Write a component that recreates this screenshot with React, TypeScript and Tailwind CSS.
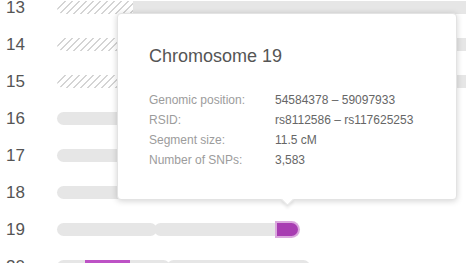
import React from "react";

const hatch =
  "bg-[repeating-linear-gradient(135deg,#d4d4d4_0_1.5px,transparent_1.5px_5px)]";

function Label({ n }: { n: number }) {
  return (
    <div className="w-[57px] shrink-0 pl-[6px] text-[17px] leading-none text-[#555]">
      {n}
    </div>
  );
}

function Row({ n, children }: { n: number; children?: React.ReactNode }) {
  return (
    <div className="flex h-[37px] items-center">
      <Label n={n} />
      <div className="flex h-[13px] items-center">{children}</div>
    </div>
  );
}

export default function App() {
  return (
    <div className="relative h-[263px] w-[466px] overflow-hidden bg-white font-['Liberation_Sans',Arial,sans-serif]">
      <div className="-mt-[11px] flex flex-col">
        <Row n={13}>
          <div className={`h-[13px] w-[76px] rounded-l-full ${hatch}`} />
          <div className="h-[13px] w-[360px] bg-[#e6e6e6]" />
        </Row>
        <Row n={14}>
          <div className={`h-[13px] w-[80px] rounded-l-full ${hatch}`} />
          <div className="h-[13px] w-[340px] bg-[#e6e6e6]" />
        </Row>
        <Row n={15}>
          <div className={`h-[13px] w-[80px] rounded-l-full ${hatch}`} />
          <div className="h-[13px] w-[340px] bg-[#e6e6e6]" />
        </Row>
        <Row n={16}>
          <div className="h-[13px] w-[300px] rounded-full bg-[#e6e6e6]" />
        </Row>
        <Row n={17}>
          <div className="h-[13px] w-[290px] rounded-full bg-[#e6e6e6]" />
        </Row>
        <Row n={18}>
          <div className="h-[13px] w-[280px] rounded-full bg-[#e6e6e6]" />
        </Row>
        <Row n={19}>
          <div className="h-[13px] w-[100px] rounded-full bg-[#e6e6e6]" />
          <div className="relative -ml-[3px] h-[13px] w-[144px] rounded-full bg-[#e6e6e6]">
            <div className="absolute right-0 top-0 h-[13px] w-[21px] rounded-l-[3px] rounded-r-full bg-[#a83db2] ring-2 ring-[#dba8de]" />
          </div>
        </Row>
        <Row n={20}>
          <div className="relative h-[13px] w-[113px] rounded-full bg-[#e6e6e6]">
            <div className="absolute left-[28px] top-0 h-[13px] w-[45px] bg-[#bd52c5]" />
          </div>
          <div className="-ml-[3px] h-[13px] w-[143px] rounded-full bg-[#e6e6e6]" />
        </Row>
      </div>

      <div className="absolute left-[117px] top-[13px] h-[187px] w-[340px] rounded-[4px] border border-[#e3e3e3] bg-white px-[31px] pt-[30px] shadow-[0_1px_6px_rgba(0,0,0,0.18)]">
        <div className="text-[18px] leading-[24px] text-[#555]">Chromosome 19</div>
        <div className="mt-[22px] grid grid-cols-[126px_1fr] text-[12px] leading-[20px]">
          <div className="text-[#9c9c9c]">Genomic position:</div>
          <div className="text-[#666]">54584378 – 59097933</div>
          <div className="text-[#9c9c9c]">RSID:</div>
          <div className="text-[#666]">rs8112586 – rs117625253</div>
          <div className="text-[#9c9c9c]">Segment size:</div>
          <div className="text-[#666]">11.5 cM</div>
          <div className="text-[#9c9c9c]">Number of SNPs:</div>
          <div className="text-[#666]">3,583</div>
        </div>
        <div className="absolute bottom-[-5px] left-[165px] h-[9px] w-[9px] rotate-45 border-b border-r border-[#e3e3e3] bg-white shadow-[2px_2px_3px_rgba(0,0,0,0.08)]" />
      </div>
    </div>
  );
}
